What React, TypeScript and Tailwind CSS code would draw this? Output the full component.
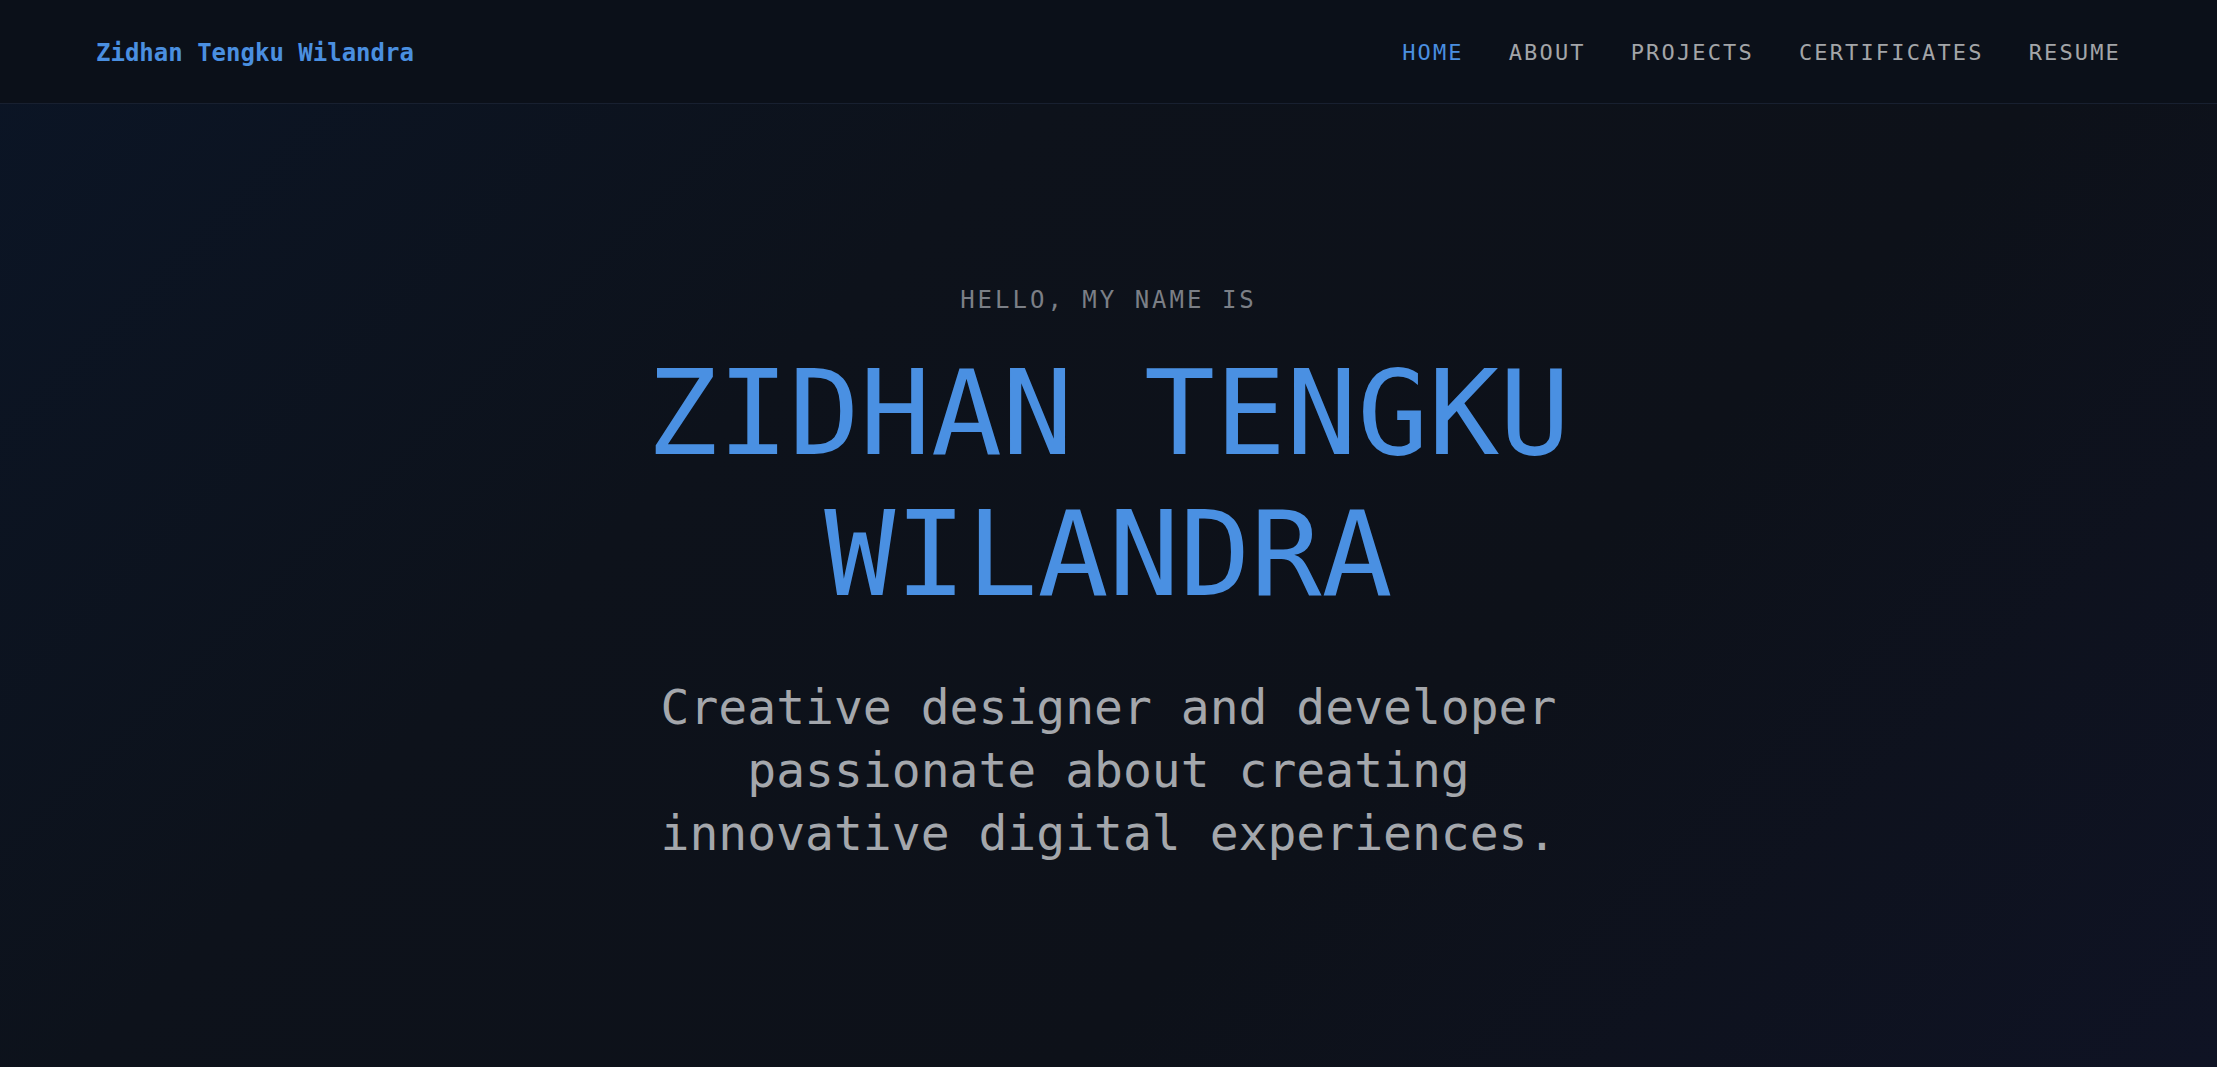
import React from "react";

const mono = { fontFamily: '"DejaVu Sans Mono", "Liberation Mono", monospace' };

export default function App() {
  const links = ["HOME", "ABOUT", "PROJECTS", "CERTIFICATES", "RESUME"];
  return (
    <div
      style={mono}
      className="min-h-screen w-full bg-[linear-gradient(135deg,#0b1526_0%,#0d121b_35%,#0d1119_65%,#0f1324_100%)] flex flex-col"
    >
      <nav className="h-[104px] shrink-0 border-b border-[#182030] bg-[#0b1019] px-24 pt-[3px] flex items-center justify-between">
        <div className="text-[24px] font-semibold text-[#4a8fe0] leading-none">Zidhan Tengku Wilandra</div>
        <ul className="flex items-center gap-[45px] text-[22px] tracking-[2.15px] leading-none">
          {links.map((l, i) => (
            <li key={l} className={i === 0 ? "text-[#4a8fe0]" : "text-[#a3a5a8]"}>
              {l}
            </li>
          ))}
        </ul>
      </nav>
      <main className="flex-1 flex flex-col items-center text-center pt-[180px] pb-[180px]">
        <div className="max-w-[1000px] flex flex-col items-center">
          <p className="text-[24px] leading-[32px] tracking-[3px] text-[#7b7f86]">HELLO, MY NAME IS</p>
          <h1 className="mt-[27px] text-[118px] leading-[141px] font-normal text-[#4a90e2]">
            ZIDHAN TENGKU WILANDRA
          </h1>
          <p className="mt-[51px] text-[48px] leading-[63px] text-[#a4a7ac]">
            Creative designer and developer passionate about creating innovative digital experiences.
          </p>
        </div>
      </main>
    </div>
  );
}
